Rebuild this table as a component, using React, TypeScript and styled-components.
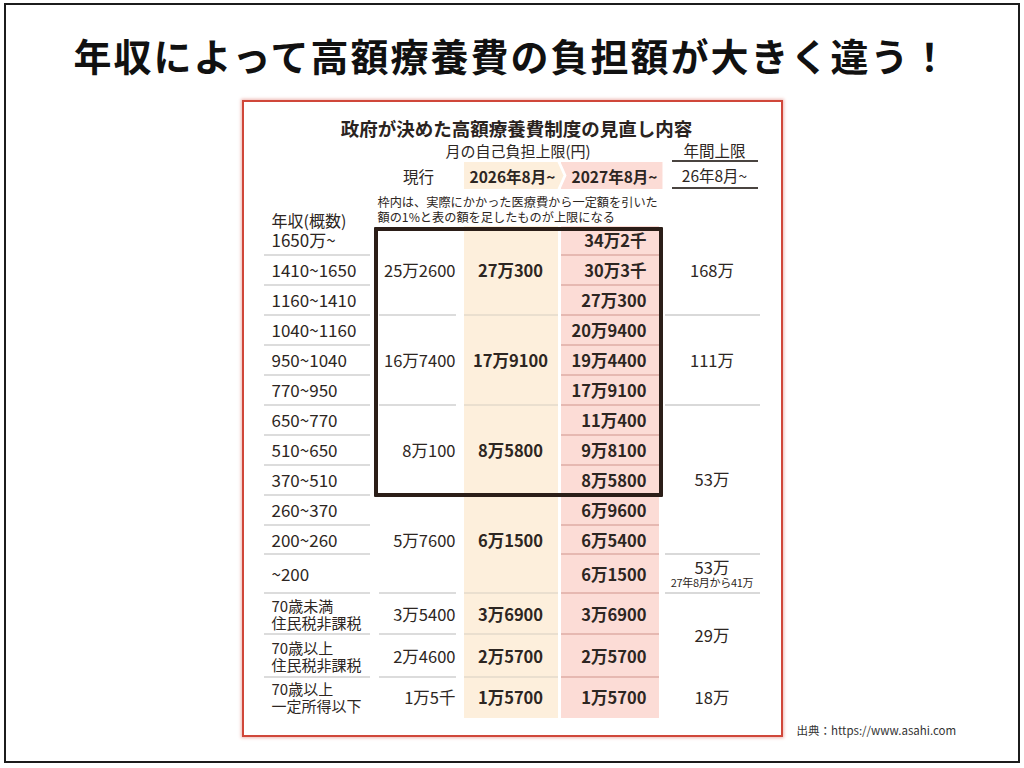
import React from "react";
import styled, { createGlobalStyle } from "styled-components";

const GlobalStyle = createGlobalStyle`
  html, body {
    margin: 0;
    padding: 0;
    background: #fff;
  }
  body {
    font-family: "Noto Sans CJK JP", "Noto Sans", sans-serif;
    color: #2d2622;
  }
  * {
    box-sizing: border-box;
  }
`;

// income | gap | current | gap | 2026 | gap | 2027 | gap | annual
const COLUMNS = "106px 8px 82px 4px 94px 3px 98px 6px 95px";

const Frame = styled.div`
  margin: 3px 4px 0;
  width: 1016px;
  height: 760px;
  border: 2px solid #1c1c1c;
  display: flex;
  flex-direction: column;
`;

const Headline = styled.h1`
  margin: 30px 0 0;
  font-size: 38px;
  line-height: 40px;
  font-weight: 700;
  letter-spacing: 2px;
  text-align: center;
  color: #111;
`;

const Stage = styled.div`
  margin-top: 25px;
  display: grid;
  grid-template-columns: 1fr 541px 1fr;
`;

const Card = styled.section`
  grid-column: 2;
  background: #fff;
  border: 2px solid #d0473a;
  box-shadow: 0 0 3px 1px rgba(214, 96, 84, 0.45);
  padding: 15px 21px 17px 20px;
`;

const Source = styled.div`
  grid-column: 3;
  align-self: end;
  padding-left: 14px;
  font-size: 11.5px;
  line-height: 14px;
  color: #333;
`;

const CardTitle = styled.h2`
  margin: 0;
  padding-left: 10px;
  text-align: center;
  font-size: 18.5px;
  line-height: 22px;
  font-weight: 700;
  color: #2a2320;
`;

const HeadGrid = styled.div`
  display: grid;
  grid-template-columns: ${COLUMNS};
  grid-template-rows: 23px 27px 37px;
`;

const Caption = styled.div`
  grid-row: 1;
  grid-column: 3 / 8;
  display: flex;
  align-items: center;
  justify-content: center;
  font-size: 15px;
`;

const AnnualHead = styled.div<{ $row: number }>`
  grid-row: ${(p) => p.$row};
  grid-column: 9;
  margin: 0 2px 0 7px;
  border-bottom: 2px solid #4a4440;
  display: flex;
  align-items: center;
  justify-content: center;
  font-size: 15.5px;
`;

const CurrentHead = styled.div`
  grid-row: 2;
  grid-column: 3;
  display: flex;
  align-items: center;
  justify-content: center;
  font-size: 15.5px;
`;

const PeriodTab = styled.div<{ $tone: "cream" | "pink" }>`
  grid-row: 2;
  grid-column: ${(p) => (p.$tone === "cream" ? 5 : 7)};
  margin-right: ${(p) => (p.$tone === "cream" ? "-6px" : "-4px")};
  background: ${(p) => (p.$tone === "cream" ? "#fdefdc" : "#fcdcd6")};
  clip-path: ${(p) =>
    p.$tone === "cream"
      ? "polygon(0 0, calc(100% - 6px) 0, 100% 50%, calc(100% - 6px) 100%, 0 100%)"
      : "polygon(0 0, 100% 0, 100% 100%, 0 100%, 6px 50%)"};
  display: flex;
  align-items: center;
  justify-content: ${(p) => (p.$tone === "cream" ? "flex-start" : "center")};
  padding-left: 6px;
  font-size: 15.5px;
  font-weight: 700;
`;

const Note = styled.div`
  grid-row: 3;
  grid-column: 3 / 10;
  padding-top: 6px;
  font-size: 12.2px;
  line-height: 15px;
`;

const IncomeHead = styled.div`
  grid-row: 3;
  grid-column: 1;
  align-self: end;
  margin-bottom: -3px;
  padding-left: 8px;
  font-size: 16px;
  line-height: 17px;
`;

const BodyGrid = styled.div`
  display: grid;
  grid-template-columns: ${COLUMNS};
  grid-template-rows: repeat(10, 30px) 29px 39px 41px 43px 40px;
`;

const Band = styled.div<{ $tone: "cream" | "pink" }>`
  grid-row: 1 / -1;
  grid-column: ${(p) => (p.$tone === "cream" ? 5 : 7)};
  background: ${(p) => (p.$tone === "cream" ? "#fdefdc" : "#fcdcd6")};
`;

const Cell = styled.div<{ $row: string; $line: boolean }>`
  grid-row: ${(p) => p.$row};
  display: flex;
  align-items: center;
  border-bottom: 2px solid ${(p) => (p.$line ? "var(--line)" : "transparent")};
  font-size: 16.5px;
  line-height: 20px;
`;

const IncomeCell = styled(Cell)`
  --line: #dcdcdc;
  grid-column: 1;
  padding-left: 8px;
`;

const IncomeLabel = styled.span<{ $double: boolean }>`
  font-size: ${(p) => (p.$double ? "15px" : "17px")};
  line-height: ${(p) => (p.$double ? "17px" : "20px")};
  white-space: pre-line;
`;

const CurrentCell = styled(Cell)<{ $lift: number }>`
  --line: #dcdcdc;
  grid-column: 3;
  margin: 0 4px 0 1px;
  justify-content: flex-end;
  padding-bottom: ${(p) => p.$lift}px;
`;

const NewCell = styled(Cell)<{ $lift: number }>`
  --line: #eadfcf;
  grid-column: 5;
  justify-content: center;
  font-weight: 700;
  padding-bottom: ${(p) => p.$lift}px;
`;

const LaterCell = styled(Cell)`
  --line: #e6b8b1;
  grid-column: 7;
  justify-content: flex-end;
  padding-right: 12px;
  font-weight: 700;
`;

const AnnualCell = styled(Cell)`
  --line: #d9d9d9;
  grid-column: 9;
  flex-direction: column;
  justify-content: center;
`;

const AnnualMain = styled.span`
  line-height: 17px;
`;

const AnnualSub = styled.span`
  font-size: 11px;
  line-height: 13px;
  letter-spacing: -0.3px;
`;

const LimitBox = styled.div`
  grid-row: 1 / 10;
  grid-column: 2 / 9;
  margin: 1px 2px -1px 4px;
  border: 4px solid #2b1e18;
  border-radius: 1px;
`;

const incomes = [
  "1650万~",
  "1410~1650",
  "1160~1410",
  "1040~1160",
  "950~1040",
  "770~950",
  "650~770",
  "510~650",
  "370~510",
  "260~370",
  "200~260",
  "~200",
  "70歳未満\n住民税非課税",
  "70歳以上\n住民税非課税",
  "70歳以上\n一定所得以下",
];

// [from, to, current, 2026]
const groups: [number, number, string, string][] = [
  [0, 3, "25万2600", "27万300"],
  [3, 6, "16万7400", "17万9100"],
  [6, 9, "8万100", "8万5800"],
  [9, 12, "5万7600", "6万1500"],
  [12, 13, "3万5400", "3万6900"],
  [13, 14, "2万4600", "2万5700"],
  [14, 15, "1万5千", "1万5700"],
];

const later = [
  "34万2千",
  "30万3千",
  "27万300",
  "20万9400",
  "19万4400",
  "17万9100",
  "11万400",
  "9万8100",
  "8万5800",
  "6万9600",
  "6万5400",
  "6万1500",
  "3万6900",
  "2万5700",
  "1万5700",
];

const annual: [number, number, string, string?][] = [
  [0, 3, "168万"],
  [3, 6, "111万"],
  [6, 11, "53万"],
  [11, 12, "53万", "27年8月から41万"],
  [12, 14, "29万"],
  [14, 15, "18万"],
];

const LAST = incomes.length;
const span = (from: number, to: number) => `${from + 1} / ${to + 1}`;

export default function App() {
  return (
    <>
      <GlobalStyle />
      <Frame>
        <Headline>年収によって高額療養費の負担額が大きく違う！</Headline>
        <Stage>
          <Card>
            <CardTitle>政府が決めた高額療養費制度の見直し内容</CardTitle>
            <HeadGrid>
              <Caption>月の自己負担上限(円)</Caption>
              <AnnualHead $row={1}>年間上限</AnnualHead>
              <CurrentHead>現行</CurrentHead>
              <PeriodTab $tone="cream">2026年8月~</PeriodTab>
              <PeriodTab $tone="pink">2027年8月~</PeriodTab>
              <AnnualHead $row={2}>26年8月~</AnnualHead>
              <IncomeHead>年収(概数)</IncomeHead>
              <Note>
                枠内は、実際にかかった医療費から一定額を引いた
                <br />
                額の1%と表の額を足したものが上限になる
              </Note>
            </HeadGrid>
            <BodyGrid>
              <Band $tone="cream" />
              <Band $tone="pink" />
              {incomes.map((label, i) => (
                <IncomeCell key={label} $row={span(i, i + 1)} $line={i < LAST - 1}>
                  <IncomeLabel $double={label.includes("\n")}>{label}</IncomeLabel>
                </IncomeCell>
              ))}
              {groups.map(([from, to, now, next]) => (
                <React.Fragment key={now}>
                  <CurrentCell $row={span(from, to)} $line={to < LAST} $lift={from === 9 ? 8 : 0}>
                    {now}
                  </CurrentCell>
                  <NewCell $row={span(from, to)} $line={to < LAST} $lift={from === 9 ? 8 : 0}>
                    {next}
                  </NewCell>
                </React.Fragment>
              ))}
              {later.map((value, i) => (
                <LaterCell key={value + i} $row={span(i, i + 1)} $line={i < LAST - 1}>
                  {value}
                </LaterCell>
              ))}
              {annual.map(([from, to, value, sub]) => (
                <AnnualCell key={from} $row={span(from, to)} $line={to < LAST && to !== 14}>
                  <AnnualMain>{value}</AnnualMain>
                  {sub && <AnnualSub>{sub}</AnnualSub>}
                </AnnualCell>
              ))}
              <LimitBox />
            </BodyGrid>
          </Card>
          <Source>出典：https://www.asahi.com</Source>
        </Stage>
      </Frame>
    </>
  );
}
